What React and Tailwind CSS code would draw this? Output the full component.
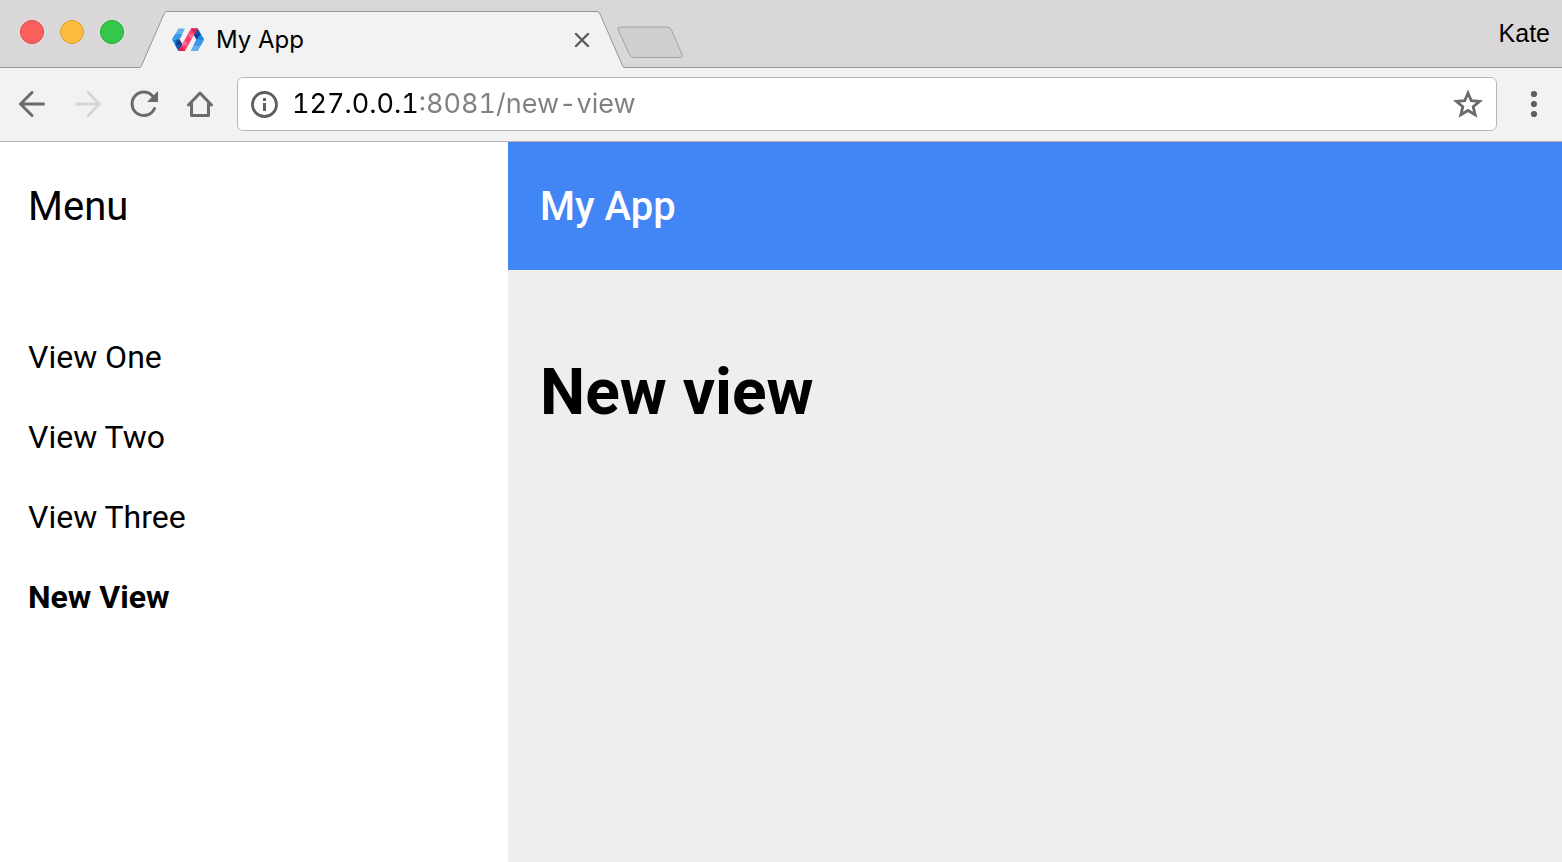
const views = [
  { label: 'View One', href: '/view1' },
  { label: 'View Two', href: '/view2' },
  { label: 'View Three', href: '/view3' },
  { label: 'New View', href: '/new-view', selected: true },
];

function PolymerLogo() {
  return (
    <svg className="h-8 w-8 shrink-0" viewBox="0 0 32 32" aria-hidden="true">
      <polygon points="6.5,4.5 13,4.5 7.5,15.5 0,15.5" fill="#64b0f0" />
      <polygon points="3.2,10 10.3,10 7.5,15.5 0,15.5" fill="#3c97ea" />
      <polygon points="0,15.5 7.5,15.5 13,27 6.5,27" fill="#1d87e4" />
      <polygon points="3.8,15.5 7.5,15.5 10.5,21 6.5,27 3.5,21.5" fill="#1656a8" />
      <polygon points="7.5,15.5 10.5,21 3.5,21" fill="#0f3f8d" />
      <polygon points="25.5,4.5 32,15.5 25.5,27 19,27 24.5,15.5 19,4.5" fill="#1d64bd" />
      <polygon points="25.5,4.5 28.8,10 24.5,15.5 21.5,10" fill="#1656a8" />
      <polygon points="21.5,10 28.8,10 24.5,15.5" fill="#0f3f8d" />
      <polygon points="28.8,10 32,15.5 24.5,15.5" fill="#1d87e4" />
      <polygon points="24.5,15.5 32,15.5 28.8,21.5 21.5,21.5" fill="#3c97ea" />
      <polygon points="21.5,21.5 28.8,21.5 25.5,27 19,27" fill="#64b0f0" />
      <polygon points="19,4.5 25.5,4.5 13,27 6.5,27" fill="#ff3b6c" />
      <polygon points="19,4.5 25.5,4.5 22.4,10" fill="#e91e50" />
      <polygon points="16,10 22.4,10 19.3,15.5" fill="#ff6c93" />
      <polygon points="9.6,21.5 13,15.5 16,21.5" fill="#ff6c93" />
      <polygon points="9.6,21.5 13,27 6.5,27" fill="#e91e50" />
    </svg>
  );
}

function TabStrip() {
  return (
    <header className="flex h-[68px] bg-[#d9d7d8]">
      <div className="flex w-[140px] shrink-0 items-start gap-4 border-b border-[#969696] pt-5 pl-5">
        <button aria-label="Close window" className="size-6 rounded-full border border-[#e0443e] bg-[#fc605c]" />
        <button aria-label="Minimize window" className="size-6 rounded-full border border-[#dea035] bg-[#fdbc40]" />
        <button aria-label="Zoom window" className="size-6 rounded-full border border-[#1fab30] bg-[#34c84a]" />
      </div>
      <div className="flex h-[57px] w-[484px] shrink-0 self-end">
        <svg className="h-[57px] w-7 shrink-0" viewBox="0 0 28 57" aria-hidden="true">
          <path d="M0 57V56.5Q1 56 1.5 55L24 3Q25 .5 27 .5H28V57Z" fill="#f2f2f2" />
          <path d="M0 56.5Q.8 56.3 1.3 55L24 3Q25 .5 27 .5H28" fill="none" stroke="#969696" />
        </svg>
        <div className="flex min-w-0 flex-1 items-center border-t border-[#969696] bg-[#f2f2f2] pl-1">
          <PolymerLogo />
          <span className="flex-1 pl-3 font-['Inter',sans-serif] text-2xl text-black">My App</span>
          <button aria-label="Close tab" className="mr-1 flex size-5 items-center justify-center">
            <svg className="size-4" viewBox="0 0 16 16" aria-hidden="true">
              <path d="M2 2L14 14M14 2L2 14" stroke="#5a5a5a" strokeWidth="2.4" strokeLinecap="round" />
            </svg>
          </button>
        </div>
        <svg className="h-[57px] w-7 shrink-0" viewBox="0 0 28 57" aria-hidden="true">
          <path d="M28 57V56.5Q27 56 26.5 55L4 3Q3 .5 1 .5H0V57Z" fill="#f2f2f2" />
          <path d="M28 56.5Q27.2 56.3 26.7 55L4 3Q3 .5 1 .5H0" fill="none" stroke="#969696" />
        </svg>
      </div>
      <div className="flex min-w-0 flex-1 items-center justify-between border-b border-[#969696] pr-3">
        <button aria-label="New tab" className="mt-4 -ml-2">
          <svg className="h-8 w-[68px]" viewBox="0 0 68 32" aria-hidden="true">
            <path d="M5 1H51Q54 1 55.5 4L65.500 27Q67.5 31.5 64 31.500H18Q15 31.5 13.500 28.500L2.500 4.500Q1 1 5 1Z" fill="#cfcfcf" stroke="#a2a2a2" />
          </svg>
        </button>
        <button className="font-['Liberation_Sans',sans-serif] text-[25px] text-black">Kate</button>
      </div>
    </header>
  );
}

function Toolbar() {
  return (
    <div className="flex h-[74px] items-center border-b border-[#b6b4b6] bg-[#f2f2f2] pb-0.5 pl-4">
      <div className="flex gap-6">
        <button aria-label="Back">
          <svg className="size-8" viewBox="0 0 32 32" fill="none" stroke="#6b6b6b" strokeWidth="3" strokeLinecap="round" strokeLinejoin="round" aria-hidden="true">
            <path d="M16 4.5L4.5 16L16 27.5M4.5 16H27.5" />
          </svg>
        </button>
        <button aria-label="Forward" disabled>
          <svg className="size-8" viewBox="0 0 32 32" fill="none" stroke="#d6d6d6" strokeWidth="3" strokeLinecap="round" strokeLinejoin="round" aria-hidden="true">
            <path d="M16 4.5L27.5 16L16 27.5M27.5 16H4.5" />
          </svg>
        </button>
        <button aria-label="Reload">
          <svg className="size-8" viewBox="0 0 32 32" fill="none" aria-hidden="true">
            <path d="M26.5 20.5A11.7 11.7 0 1 1 24.5 8" stroke="#6b6b6b" strokeWidth="3" strokeLinecap="round" />
            <path d="M30 3V14H19Z" fill="#6b6b6b" />
          </svg>
        </button>
        <button aria-label="Home">
          <svg className="size-8" viewBox="0 0 32 32" fill="none" stroke="#6b6b6b" strokeWidth="3" strokeLinecap="round" strokeLinejoin="round" aria-hidden="true">
            <path d="M4.5 17L16 5L27.5 17M7.5 15.5V27.5H24.5V15.5" />
          </svg>
        </button>
      </div>
      <div className="ml-[21px] flex h-[54px] min-w-0 flex-1 items-center rounded-md border border-[#b6b6b6] bg-white px-3">
        <button aria-label="View site information">
          <svg className="size-7" viewBox="0 0 28 28" fill="none" aria-hidden="true">
            <circle cx="14.5" cy="14.5" r="12" stroke="#5f5f5f" strokeWidth="2.8" />
            <path d="M13 13H16V21H13ZM13 8H16V11H13Z" fill="#5f5f5f" />
          </svg>
        </button>
        <input
          type="text"
          aria-label="Address"
          defaultValue="127.0.0.1:8081/new-view"
          className="ml-[14px] min-w-0 flex-1 bg-linear-to-r from-black from-[126px] to-[#808080] to-[126px] bg-clip-text pt-0.5 font-['Inter',sans-serif] text-[27px] text-transparent tabular-nums caret-black outline-none"
        />
        <button aria-label="Bookmark this page">
          <svg className="size-8" viewBox="0 0 32 32" fill="none" aria-hidden="true">
            <path d="M16 5L19.2 12.6L27.6 13.3L21.2 18.7L23.2 26.8L16 22.5L8.8 26.8L10.8 18.7L4.4 13.3L12.8 12.6Z" stroke="#6b6b6b" strokeWidth="2.8" />
          </svg>
        </button>
      </div>
      <button aria-label="Browser menu" className="mr-3 ml-[21px]">
        <svg className="size-8" viewBox="0 0 32 32" fill="#5f5f5f" aria-hidden="true">
          <circle cx="16" cy="6" r="3.1" />
          <circle cx="16" cy="16" r="3.1" />
          <circle cx="16" cy="26" r="3.1" />
        </svg>
      </button>
    </div>
  );
}

export default function App() {
  return (
    <div className="flex min-h-screen flex-col bg-white font-['Roboto',sans-serif] text-black">
      <TabStrip />
      <Toolbar />
      <div className="flex flex-1">
        <aside className="w-[508px] shrink-0 bg-white px-7">
          <h2 className="flex h-32 items-center pt-0.5 text-[40px]">Menu</h2>
          <nav className="mt-[47px] flex flex-col">
            {views.map((view) => (
              <a
                key={view.href}
                href={view.href}
                aria-current={view.selected ? 'page' : undefined}
                className={view.selected ? 'text-[32px] leading-[80px] font-bold' : 'text-[32px] leading-[80px]'}
              >
                {view.label}
              </a>
            ))}
          </nav>
        </aside>
        <main className="min-w-0 flex-1 bg-[#eeeeee]">
          <div className="flex h-32 items-center bg-[#4285f4] px-8 pt-0.5 text-[40px] font-medium text-white">My App</div>
          <h1 className="px-8 pt-[75px] text-[64px] font-bold">New view</h1>
        </main>
      </div>
    </div>
  );
}
